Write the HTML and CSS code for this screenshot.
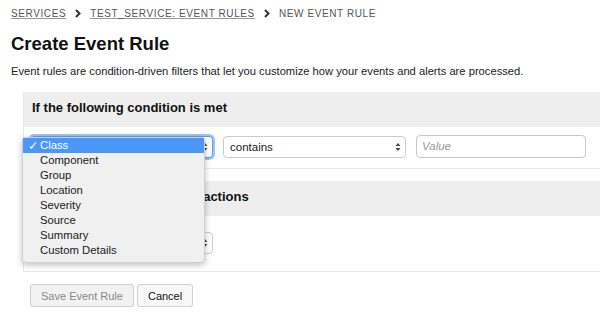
FILE: index.html
```html
<!DOCTYPE html>
<html lang="en">
<head>
    <meta charset="UTF-8">
    <title>Create Event Rule</title>
    <link rel="stylesheet" href="styles.css">
</head>
<body>
    <div class="page">
        <nav class="breadcrumb">
            <a href="#">Services</a>
            <svg class="crumb-sep" width="6" height="9" viewBox="0 0 6 9"><path d="M1 1 L4.5 4.5 L1 8" fill="none" stroke="#333" stroke-width="2"/></svg>
            <a href="#">Test_Service: Event Rules</a>
            <svg class="crumb-sep" width="6" height="9" viewBox="0 0 6 9"><path d="M1 1 L4.5 4.5 L1 8" fill="none" stroke="#333" stroke-width="2"/></svg>
            <span>New Event Rule</span>
        </nav>

        <h1>Create Event Rule</h1>
        <p class="intro">Event rules are condition-driven filters that let you customize how your events and alerts are processed.</p>

        <div class="rule-section">
            <div class="section-head">If the following condition is met</div>
            <div class="section-row first-row">
                <div class="select focused">
                    <span>Class</span>
                    <svg class="arrows" width="6" height="10" viewBox="0 0 6 10"><path d="M3 1 L5.5 4 H0.5 Z M3 9 L5.5 6 H0.5 Z" fill="#444"/></svg>
                </div>
                <div class="select">
                    <span>contains</span>
                    <svg class="arrows" width="6" height="10" viewBox="0 0 6 10"><path d="M3 1 L5.5 4 H0.5 Z M3 9 L5.5 6 H0.5 Z" fill="#444"/></svg>
                </div>
                <div class="text-input">Value</div>
            </div>

            <div class="menu">
                <div class="menu-item selected"><span class="check">✓</span>Class</div>
                <div class="menu-item">Component</div>
                <div class="menu-item">Group</div>
                <div class="menu-item">Location</div>
                <div class="menu-item">Severity</div>
                <div class="menu-item">Source</div>
                <div class="menu-item">Summary</div>
                <div class="menu-item">Custom Details</div>
            </div>
        </div>

        <div class="rule-section">
            <div class="section-head">Then perform the following actions</div>
            <div class="section-row second-row">
                <div class="select">
                    <span>Set severity</span>
                    <svg class="arrows" width="6" height="10" viewBox="0 0 6 10"><path d="M3 1 L5.5 4 H0.5 Z M3 9 L5.5 6 H0.5 Z" fill="#444"/></svg>
                </div>
            </div>
        </div>

        <div class="buttons">
            <button class="btn" disabled>Save Event Rule</button>
            <button class="btn">Cancel</button>
        </div>
    </div>
</body>
</html>
```

FILE: styles.css
```css
body {
    margin: 0;
    font-family: "Liberation Sans", Arial, sans-serif;
    color: #222;
    background-color: white;
    overflow: hidden;
}
.page {
    padding: 5px 0 0 11px;
}
.breadcrumb {
    display: flex;
    align-items: center;
    gap: 9px;
    height: 16px;
    font-size: 10px;
    letter-spacing: 0.6px;
    text-transform: uppercase;
    color: #555;
}
.breadcrumb a {
    color: #555;
    text-decoration: underline;
    text-decoration-color: #999;
}
h1 {
    font-size: 18.5px;
    font-weight: 700;
    color: #111;
    margin: 11px 0 0 0;
    line-height: 24px;
}
.intro {
    font-size: 11.2px;
    color: #222;
    margin: 8px 0 0 0;
    line-height: 14px;
}
.rule-section {
    position: relative;
    margin: 14px 0 0 12px;
    border-left: 1px solid #e8e8e8;
    border-bottom: 1px solid #e8e8e8;
}
.rule-section + .rule-section {
    margin-top: 12px;
}
.section-head {
    background-color: #eeeeee;
    height: 35px;
    line-height: 31px;
    padding-left: 8px;
    font-size: 13px;
    font-weight: 700;
    color: #111;
}
.section-row {
    display: flex;
    align-items: flex-start;
    gap: 10px;
    padding: 8px 0 10px 6px;
}
.second-row {
    padding: 15px 0 17px 6px;
}
.select {
    width: 183px;
    height: 22px;
    box-sizing: border-box;
    margin-top: 1px;
    border: 1px solid #cbcbcb;
    border-radius: 4px;
    background-color: white;
    display: flex;
    align-items: center;
    justify-content: space-between;
    padding: 0 4px 0 6px;
    font-size: 11.5px;
    color: #222;
}
.select.focused {
    border-color: #5e9ef0;
    box-shadow: 0 0 0 2px #9cc3f5;
}
.text-input {
    width: 170px;
    height: 23px;
    box-sizing: border-box;
    border: 1px solid #c8c8c8;
    border-radius: 4px;
    padding: 0 5px;
    line-height: 21px;
    font-size: 11.5px;
    font-style: italic;
    color: #999;
}
.menu {
    position: absolute;
    left: -2px;
    top: 45px;
    width: 183px;
    box-sizing: border-box;
    padding: 0 0 4px 0;
    background-color: #f0f0f0;
    border: 1px solid #d0d0d0;
    border-radius: 4px;
    box-shadow: 0 2px 6px rgba(0, 0, 0, 0.25);
    font-size: 11.3px;
    color: #1a1a1a;
    z-index: 2;
}
.menu-item {
    position: relative;
    height: 15px;
    line-height: 15px;
    padding-left: 17px;
}
.menu-item.selected {
    background-color: #4a97f5;
    color: white;
}
.check {
    position: absolute;
    left: 5px;
    top: 0;
    font-family: "DejaVu Sans", sans-serif;
    font-size: 12.5px;
    font-weight: 700;
}
.buttons {
    display: flex;
    gap: 3px;
    margin: 12px 0 0 19px;
}
.btn {
    height: 23px;
    padding: 0 10px;
    font-family: "Liberation Sans", Arial, sans-serif;
    font-size: 11px;
    color: #111;
    background-color: #f8f8f8;
    border: 1px solid #d0d0d0;
    border-radius: 3px;
    box-shadow: 0 1px 1px rgba(0, 0, 0, 0.08);
}
.btn:disabled {
    color: #888;
    background-color: #f2f2f2;
}
```
